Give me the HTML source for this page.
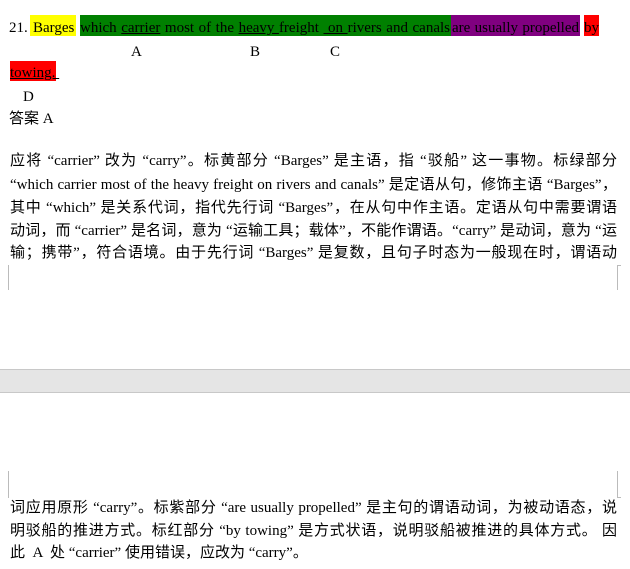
<!DOCTYPE html>
<html><head><meta charset="utf-8"><style>
body{margin:0;width:630px;height:569px;background:#fff;position:relative;overflow:hidden;font-family:"Liberation Serif","Noto Sans CJK SC",serif;font-size:15px;color:#000}
.a{position:absolute;white-space:nowrap;line-height:21px}
.h{position:absolute}
.j{position:absolute;left:10px;width:607px;text-align:justify;text-align-last:justify;white-space:nowrap;line-height:20px;font-size:15px}
.cm{position:absolute;background:#bbb}
u{text-decoration:underline}
</style></head><body>
<div class="h" style="left:30px;top:15px;width:46px;height:21px;background:#ffff00"></div>
<div class="h" style="left:80px;top:15px;width:371px;height:21px;background:#008000"></div>
<div class="h" style="left:451px;top:15px;width:129px;height:21px;background:#800080"></div>
<div class="h" style="left:584px;top:15px;width:15px;height:21px;background:#ff0000"></div>
<div class="h" style="left:10px;top:61px;width:46px;height:20px;background:#ff0000"></div>

<div class="a" style="left:9px;top:18px;">21.</div>
<div class="a" style="left:33px;top:18px;">Barges</div>
<div class="a" style="left:80px;top:18px;width:370px;text-align:justify;text-align-last:justify">which <u>carrier</u> most of the <u>heavy </u>freight <u>&nbsp;on </u>rivers and canals</div>
<div class="a" style="left:452px;top:18px;width:127px;text-align:justify;text-align-last:justify">are usually propelled</div>
<div class="a" style="left:584px;top:18px;">by</div>
<div class="a" style="left:131px;top:42px;">A</div>
<div class="a" style="left:250px;top:42px;">B</div>
<div class="a" style="left:330px;top:42px;">C</div>
<div class="a" style="left:10px;top:63px;"><u>towing.&nbsp;</u></div>
<div class="a" style="left:23px;top:87px;">D</div>
<div class="a" style="left:9px;top:109px;">答案 A</div>

<div class="j" style="top:151px">应将 “carrier” 改为 “carry”。标黄部分 “Barges” 是主语，指 “驳船” 这一事物。标绿部分</div>
<div class="j" style="top:175px">“which carrier most of the heavy freight on rivers and canals” 是定语从句，修饰主语 “Barges”，</div>
<div class="j" style="top:198px">其中 “which” 是关系代词，指代先行词 “Barges”，在从句中作主语。定语从句中需要谓语</div>
<div class="j" style="top:221px">动词，而 “carrier” 是名词，意为 “运输工具；载体”，不能作谓语。“carry” 是动词，意为 “运</div>
<div class="j" style="top:243px">输；携带”，符合语境。由于先行词 “Barges” 是复数，且句子时态为一般现在时，谓语动</div>

<div class="cm" style="left:8px;top:265px;width:1px;height:25px"></div>
<div class="cm" style="left:617px;top:265px;width:1px;height:25px"></div>
<div class="cm" style="left:617px;top:265px;width:4px;height:1px"></div>

<div style="position:absolute;left:0;top:369px;width:630px;height:1px;background:#c8c8c8"></div>
<div style="position:absolute;left:0;top:370px;width:630px;height:22px;background:#e5e5e5"></div>
<div style="position:absolute;left:0;top:392px;width:630px;height:1px;background:#c8c8c8"></div>

<div class="cm" style="left:8px;top:471px;width:1px;height:27px"></div>
<div class="cm" style="left:617px;top:471px;width:1px;height:27px"></div>
<div class="cm" style="left:617px;top:497px;width:4px;height:1px"></div>

<div class="j" style="top:498px">词应用原形 “carry”。标紫部分 “are usually propelled” 是主句的谓语动词，为被动语态，说</div>
<div class="j" style="top:521px">明驳船的推进方式。标红部分 “by towing” 是方式状语，说明驳船被推进的具体方式。 因</div>
<div class="a" style="left:10px;top:543px;line-height:20px">此 &nbsp;A &nbsp;处 “carrier” 使用错误，应改为 “carry”。</div>
</body></html>
